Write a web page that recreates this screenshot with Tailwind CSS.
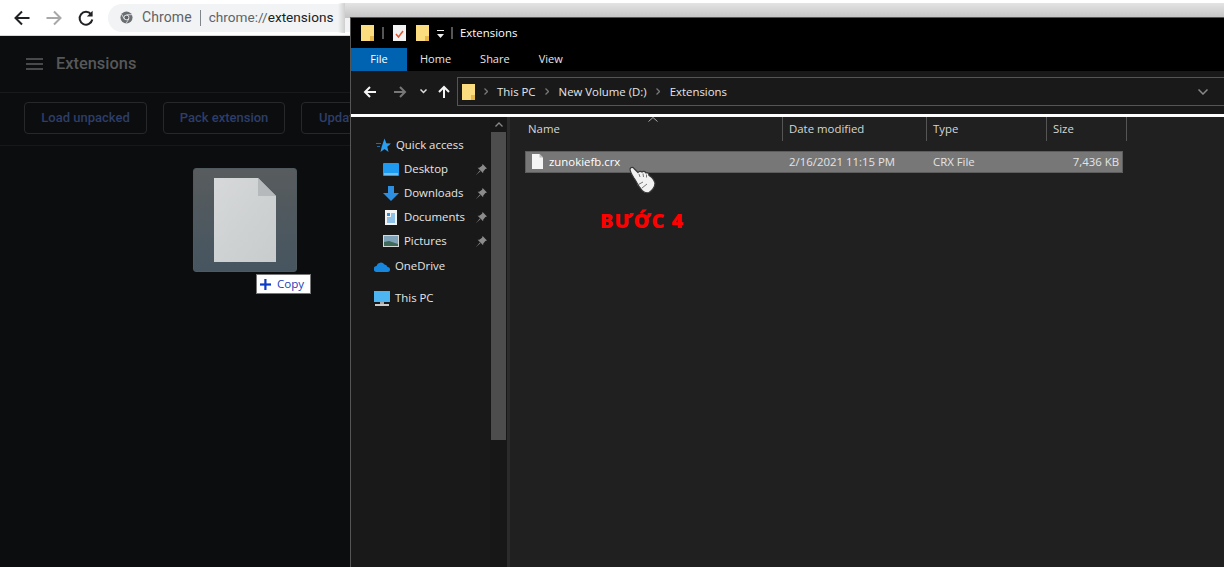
<!DOCTYPE html>
<html>
<head>
<meta charset="utf-8">
<script src="https://cdn.jsdelivr.net/npm/@tailwindcss/browser@4"></script>
</head>
<body class="relative w-[1224px] h-[567px] overflow-hidden bg-[#0c0d0e] font-['Roboto',sans-serif]">

<!-- Chrome toolbar -->
<div class="flex items-center h-[36px] bg-white border-b border-[#d8d8d8] pl-[13px]">
  <svg class="w-[18px] h-[18px]" viewBox="0 0 18 18" fill="none" stroke="#202124" stroke-width="2"><path d="M16.5 9H2.5M9 2.5L2.5 9L9 15.5"/></svg>
  <svg class="w-[18px] h-[18px] ml-[14px]" viewBox="0 0 18 18" fill="none" stroke="#a8a8a8" stroke-width="2"><path d="M1.5 9H15.5M9 2.5L15.5 9L9 15.5"/></svg>
  <svg class="w-[18px] h-[18px] ml-[14px]" viewBox="0 0 18 18" fill="none"><path d="M14 5.2A6.4 6.4 0 1 0 15.3 10.500" stroke="#202124" stroke-width="2"/><path d="M15.600 1.800V7.600H9.800Z" fill="#202124"/></svg>
  <div class="ml-[13px] flex items-center h-[28px] w-[260px] rounded-l-full bg-[#f1f3f4] pl-[12px] text-[14px]">
    <svg class="w-[13px] h-[13px] shrink-0" viewBox="0 0 14 14"><circle cx="7" cy="7" r="6.5" fill="#6b6f72"/><circle cx="7" cy="7" r="3" fill="#f1f3f4"/><circle cx="7" cy="7" r="2.2" fill="#5f6368"/><path d="M7 4H13M4.500 8.500L1.800 3.500M9.500 8.500L6.500 13.500" stroke="#f1f3f4" stroke-width="0.8"/></svg>
    <span class="ml-[9px] text-[#5f6368] tracking-[0.1px]">Chrome</span>
    <span class="ml-[8px] w-px h-[16px] bg-[#80868b]"></span>
    <span class="ml-[8px] text-[13.6px] text-[#5f6368]">chrome://<span class="text-[#202124]">extensions</span></span>
  </div>
</div>

<!-- Extensions page -->
<div class="flex items-center h-[57px] border-b border-[#191a1c] pl-[26px]">
  <svg class="w-[17px] h-[12px]" viewBox="0 0 17 12" fill="#47494b"><rect width="17" height="2"/><rect y="5" width="17" height="2"/><rect y="10" width="17" height="2"/></svg>
  <span class="ml-[13px] text-[16.4px] font-medium text-[#56585a]">Extensions</span>
</div>
<div class="flex items-center gap-[16px] h-[53px] pb-[2px] border-b border-[#17181a] pl-[24px] text-[13px] font-medium text-[#2c3e6a]">
  <div class="flex items-center justify-center w-[123px] h-[32px] border border-[#26282a] rounded-[4px]">Load unpacked</div>
  <div class="flex items-center justify-center w-[122px] h-[32px] border border-[#26282a] rounded-[4px]">Pack extension</div>
  <div class="flex items-center pl-[17px] w-[100px] h-[32px] border border-[#26282a] rounded-[4px]">Update</div>
</div>

<!-- Dragged file -->
<div class="absolute left-[193px] top-[168px] w-[104px] h-[104px] rounded-[3px] border border-[#505a5e] bg-gradient-to-b from-[#585c5e] to-[#465560] flex items-center justify-center">
  <svg class="w-[62px] h-[84px]" viewBox="0 0 62 84"><defs><linearGradient id="f" x1="0" y1="0" x2="1" y2="1"><stop offset="0" stop-color="#d6d8d9"/><stop offset="1" stop-color="#c8cccd"/></linearGradient></defs><path d="M0 0H44L62 18V84H0Z" fill="url(#f)"/><path d="M44 0L62 18H44Z" fill="#b6b9bb"/></svg>
</div>
<div class="absolute left-[256px] top-[274px] w-[55px] h-[20px] bg-white border border-[#777] flex items-center pl-[3px] text-[12px] text-[#1a3fb8] font-['Open_Sans',sans-serif]">
  <svg class="w-[11px] h-[11px]" viewBox="0 0 11 11" fill="#0a3cc4"><rect x="4.300" width="2.200" height="11"/><rect y="4.400" width="11" height="2.200"/></svg>
  <span class="ml-[6px] text-[11.6px]">Copy</span>
</div>

<!-- Shadow band behind explorer -->
<div class="absolute left-[345px] top-[3px] w-[879px] h-[15px] bg-gradient-to-b from-[#e4e4e4] to-[#c4c4c4]"></div>
<div class="absolute left-[338px] top-[3px] w-[7px] h-[30px] bg-gradient-to-r from-transparent to-[#cfcfcf]"></div>

<!-- Explorer window -->
<div class="absolute left-[350px] top-[17px] w-[874px] h-[550px] flex flex-col border-l border-t border-[#555] font-['Open_Sans',sans-serif] text-[11.4px] text-[#e6e6e6] bg-[#202020]">
  <!-- Title bar -->
  <div class="flex items-center h-[30px] bg-black pl-[10px] shrink-0">
    <svg class="w-[13px] h-[16px]" viewBox="0 0 13 16"><rect width="13" height="16" fill="#fbdc7f"/><rect x="9" y="11" width="4" height="5" fill="#e7b94c"/></svg>
    <span class="ml-[8px] w-[2px] h-[12px] bg-[#555]"></span>
    <svg class="ml-[9px] w-[13px] h-[16px]" viewBox="0 0 13 16"><rect width="13" height="16" fill="#f2f2f2"/><path d="M3 9L5.500 12L10 6" stroke="#e2552b" stroke-width="1.500" fill="none"/></svg>
    <svg class="ml-[10px] w-[13px] h-[16px]" viewBox="0 0 13 16"><rect width="13" height="16" fill="#fbdc7f"/><rect x="9" y="11" width="4" height="5" fill="#e7b94c"/></svg>
    <svg class="ml-[7px] w-[9px] h-[9px] mt-[3px]" viewBox="0 0 9 9" fill="#eee"><rect x="1" width="7" height="1"/><path d="M1 4H8L4.500 8Z"/></svg>
    <span class="ml-[6px] w-[2px] h-[12px] bg-[#555]"></span>
    <span class="ml-[7px] text-white">Extensions</span>
  </div>
  <!-- Ribbon tabs -->
  <div class="flex items-stretch h-[23px] bg-black shrink-0 text-[11px]">
    <div class="w-[56px] bg-[#0063b1] text-white flex items-center justify-center">File</div>
    <div class="ml-[13px] flex items-center">Home</div>
    <div class="ml-[29px] flex items-center">Share</div>
    <div class="ml-[29px] flex items-center">View</div>
  </div>
  <!-- Address row -->
  <div class="flex items-center h-[43px] bg-[#191919] shrink-0 pb-[2px]">
    <svg class="ml-[12px] w-[13px] h-[12px]" viewBox="0 0 13 12" fill="none" stroke="#f4f4f4" stroke-width="2"><path d="M13 6H2M7 1L2 6L7 11"/></svg>
    <svg class="ml-[18px] w-[13px] h-[12px]" viewBox="0 0 13 12" fill="none" stroke="#777" stroke-width="2"><path d="M0 6H11M6 1L11 6L6 11"/></svg>
    <svg class="ml-[13px] w-[7px] h-[5px]" viewBox="0 0 7 5" fill="none" stroke="#ddd" stroke-width="1.500"><path d="M.5 .5L3.500 3.500L6.500 .5"/></svg>
    <svg class="ml-[11px] w-[12px] h-[13px]" viewBox="0 0 12 13" fill="none" stroke="#f4f4f4" stroke-width="2"><path d="M6 13V2M1 7L6 2L11 7"/></svg>
    <div class="ml-[7px] flex items-center flex-1 h-[29px] border border-[#555] border-r-0 bg-[#191919] pl-[4px]">
      <svg class="w-[13px] h-[16px]" viewBox="0 0 13 16"><rect width="13" height="16" fill="#fbdc7f"/><rect x="9" y="11" width="4" height="5" fill="#e7b94c"/></svg>
      <svg class="ml-[9px] w-[4px] h-[7px]" viewBox="0 0 4 7" fill="none" stroke="#777" stroke-width="1.300"><path d="M.5 .5L3.500 3.500L.5 6.500"/></svg>
      <span class="ml-[9px]">This PC</span>
      <svg class="ml-[9px] w-[4px] h-[7px]" viewBox="0 0 4 7" fill="none" stroke="#777" stroke-width="1.300"><path d="M.5 .5L3.500 3.500L.5 6.500"/></svg>
      <span class="ml-[10px]">New Volume (D:)</span>
      <svg class="ml-[9px] w-[4px] h-[7px]" viewBox="0 0 4 7" fill="none" stroke="#777" stroke-width="1.300"><path d="M.5 .5L3.500 3.500L.5 6.500"/></svg>
      <span class="ml-[10px]">Extensions</span>
      <svg class="ml-auto mr-[16px] w-[10px] h-[6px]" viewBox="0 0 10 6" fill="none" stroke="#888" stroke-width="1.500"><path d="M.5 .5L5 5L9.500 .5"/></svg>
    </div>
  </div>
  <div class="h-[3px] bg-white shrink-0"></div>
  <!-- Body -->
  <div class="flex flex-1 min-h-0">
    <!-- Nav pane -->
    <div class="w-[139px] bg-[#191919] pt-[16px] shrink-0 flex flex-col text-[#e6e6e6]">
      <div class="flex items-center h-[24px] pl-[25px] gap-[5px]">
        <svg class="w-[15px] h-[15px]" viewBox="0 0 15 15" fill="#2a9ff0"><path d="M8.500 0.500L10.300 5.200L15 5.600L11.300 8.700L12.500 14L8.500 11L4.500 14L5.700 8.700Z"/><path d="M0 5H5V6H0ZM1 8H4V9H1Z" fill="#1a6fb0"/></svg>
        <span>Quick access</span>
      </div>
      <div class="flex items-center h-[24px] pl-[32px]">
        <svg class="w-[16px] h-[13px]" viewBox="0 0 16 13"><rect width="16" height="13" rx="1" fill="#1e9bf0"/><rect x="1" y="10.500" width="14" height="1" fill="#bfe3fb"/></svg>
        <span class="ml-[5px]">Desktop</span>
        <svg class="ml-auto mr-[3px] w-[11px] h-[11px]" viewBox="0 0 10 10" fill="#8b8b8b"><path d="M6 0L10 4L8.500 4.500L6.500 7L6.500 8.500L1.500 3.500L3 3.500L5.500 1.500ZM3.500 6L0 10L4 6.500Z"/></svg>
      </div>
      <div class="flex items-center h-[24px] pl-[32px]">
        <svg class="w-[16px] h-[15px]" viewBox="0 0 16 15" fill="#2e8fe0"><path d="M5 0H11V7H16L8 15L0 7H5Z"/></svg>
        <span class="ml-[5px]">Downloads</span>
        <svg class="ml-auto mr-[3px] w-[11px] h-[11px]" viewBox="0 0 10 10" fill="#8b8b8b"><path d="M6 0L10 4L8.500 4.500L6.500 7L6.500 8.500L1.500 3.500L3 3.500L5.500 1.500ZM3.500 6L0 10L4 6.500Z"/></svg>
      </div>
      <div class="flex items-center h-[24px] pl-[34px]">
        <svg class="w-[12px] h-[15px]" viewBox="0 0 12 15"><rect width="12" height="15" fill="#f2f2f2"/><rect x="2" y="3" width="3" height="3" fill="#2e8fe0"/><path d="M6 4H10M6 6H10M2 8H10M2 10H10M2 12H10" stroke="#2e8fe0"/></svg>
        <span class="ml-[7px]">Documents</span>
        <svg class="ml-auto mr-[3px] w-[11px] h-[11px]" viewBox="0 0 10 10" fill="#8b8b8b"><path d="M6 0L10 4L8.500 4.500L6.500 7L6.500 8.500L1.500 3.500L3 3.500L5.500 1.500ZM3.500 6L0 10L4 6.500Z"/></svg>
      </div>
      <div class="flex items-center h-[24px] pl-[32px]">
        <svg class="w-[16px] h-[12px]" viewBox="0 0 16 12"><rect width="16" height="12" fill="#d8d8d8"/><rect x="1" y="1" width="14" height="10" fill="#7fa3b8"/><path d="M1 11V7L6 6L15 9V11Z" fill="#3f6a5a"/></svg>
        <span class="ml-[5px]">Pictures</span>
        <svg class="ml-auto mr-[3px] w-[11px] h-[11px]" viewBox="0 0 10 10" fill="#8b8b8b"><path d="M6 0L10 4L8.500 4.500L6.500 7L6.500 8.500L1.500 3.500L3 3.500L5.500 1.500ZM3.500 6L0 10L4 6.500Z"/></svg>
      </div>
      <div class="flex items-center h-[24px] pl-[23px] mt-[1px]">
        <svg class="w-[16px] h-[11px]" viewBox="0 0 16 11"><path d="M3 11A3 3 0 0 1 2.500 5A4.500 4.500 0 0 1 10.500 3.500A3.500 3.500 0 0 1 13.500 6A2.500 2.500 0 0 1 13.500 11Z" fill="#1787de"/></svg>
        <span class="ml-[5px]">OneDrive</span>
      </div>
      <div class="flex items-center h-[24px] pl-[23px] mt-[8px]">
        <svg class="w-[16px] h-[15px]" viewBox="0 0 16 15"><rect width="16" height="11" fill="#4db5f2"/><rect x="6" y="11" width="4" height="2" fill="#aaa"/><rect x="1" y="13" width="14" height="2" fill="#ccc"/></svg>
        <span class="ml-[5px]">This PC</span>
      </div>
    </div>
    <!-- Scrollbar -->
    <div class="w-[17px] bg-[#171717] shrink-0 flex flex-col items-center">
      <svg class="mt-[5px] w-[8px] h-[5px]" viewBox="0 0 8 5" fill="none" stroke="#888" stroke-width="1.300"><path d="M.5 4.500L4 1L7.500 4.500"/></svg>
      <div class="mt-[5px] w-[15px] h-[308px] bg-[#4d4d4d]"></div>
    </div>
    <div class="w-[3px] bg-[#2b2b2b] shrink-0"></div>
    <!-- File list -->
    <div class="relative flex-1 bg-[#202020]">
      <svg class="absolute left-[138px] top-[0px] w-[10px] h-[5px]" viewBox="0 0 10 5" fill="none" stroke="#aaa"><path d="M.5 4.500L5 .5L9.500 4.500"/></svg>
      <div class="flex h-[25px] text-[#d6d6d6] pb-[1px]">
        <div class="w-[273px] border-r border-[#555] pl-[18px] flex items-center">Name</div>
        <div class="w-[144px] border-r border-[#555] pl-[6px] flex items-center">Date modified</div>
        <div class="w-[120px] border-r border-[#555] pl-[6px] flex items-center">Type</div>
        <div class="w-[80px] border-r border-[#555] pl-[6px] flex items-center">Size</div>
      </div>
      <div class="flex items-center ml-[15px] mt-[9px] w-[598px] h-[22px] bg-[#777] border border-[#5d5d5d] text-[#e4e4e4]">
        <div class="w-[257px] flex items-center pl-[6px] text-white">
          <svg class="w-[11px] h-[15px]" viewBox="0 0 11 15"><path d="M0 0H7.500L11 3.500V15H0Z" fill="#f4f4f4"/><path d="M7.500 0L11 3.500H7.500Z" fill="#bbb"/></svg>
          <span class="ml-[6px]">zunokiefb.crx</span>
        </div>
        <div class="w-[144px] pl-[6px]">2/16/2021 11:15 PM</div>
        <div class="w-[120px] pl-[6px]">CRX File</div>
        <div class="flex-1 text-right pr-[3px]">7,436 KB</div>
      </div>
      <!-- Hand cursor -->
      <svg class="absolute left-[118px] top-[49px] w-[28px] h-[28px]" viewBox="0 0 28 28"><path d="M2 3C3 1 5 1 6 2.500L10 6.500C11 5 13 5 14 6C15 5 17 5 18 7C20 6 21 8 21 9.500C24 11 26 14 27 17C27 21 24 25 21 26.500C17 27.500 15 26 13 23C10 20 9 16 6 12C4 9 2 6 2 3Z" fill="#f2f2f2" stroke="#3a3a3a" stroke-width="1.200"/><path d="M11 8L12 11M15 7.500L15.500 11M18.500 8.500L18.500 11.500M9.500 19L15 16M14 22L19 18" stroke="#777" stroke-width="1"/></svg>
      <div class="absolute left-[90px] top-[91px] text-[20px] leading-[26px] font-extrabold tracking-[1px] text-[#ff0000] font-['Open_Sans',sans-serif]">BƯỚC 4</div>
    </div>
  </div>
</div>
</body>
</html>
